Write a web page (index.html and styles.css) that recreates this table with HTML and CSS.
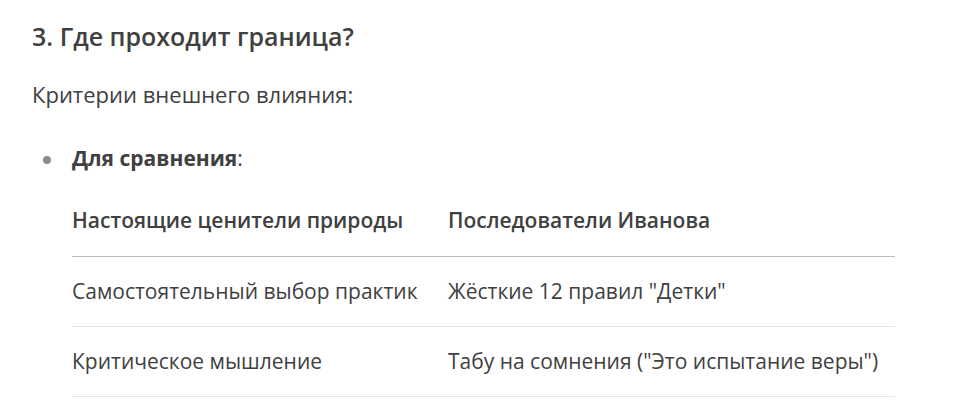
FILE: index.html
```html
<!DOCTYPE html>
<html lang="ru">
<head>
<meta charset="utf-8">
<title>Где проходит граница?</title>
<link rel="stylesheet" href="styles.css">
</head>
<body>
<main class="doc">
  <h3 class="doc-title">3. Где проходит граница?</h3>
  <p class="doc-text">Критерии внешнего влияния:</p>
  <ul class="doc-list">
    <li class="doc-item">
      <p class="item-label"><strong>Для сравнения</strong>:</p>
      <div class="compare">
        <div class="cell head">Настоящие ценители природы</div>
        <div class="cell head">Последователи Иванова</div>
        <div class="cell">Самостоятельный выбор практик</div>
        <div class="cell">Жёсткие 12 правил "Детки"</div>
        <div class="cell">Критическое мышление</div>
        <div class="cell">Табу на сомнения ("Это испытание веры")</div>
      </div>
    </li>
  </ul>
</main>
</body>
</html>
```

FILE: styles.css
```css
html, body {
  margin: 0;
  padding: 0;
  background: #ffffff;
}

body {
  font-family: "Open Sans", "Noto Sans", "DejaVu Sans", sans-serif;
  color: #404040;
  font-size: 21px;
  line-height: 27px;
}

.doc {
  width: 863px;
  padding: 0 0 0 32px;
}

.doc-title {
  margin: 21px 0 0;
  font-size: 25px;
  line-height: 31px;
  font-weight: 600;
}

.doc-text {
  margin: 29px 0 0;
  font-size: 22px;
}

.doc-list {
  margin: 37px 0 0;
  padding: 0 0 0 40px;
  list-style: none;
}

.doc-item {
  position: relative;
}

.doc-item::before {
  content: "";
  position: absolute;
  left: -29px;
  top: 11px;
  width: 8px;
  height: 8px;
  border-radius: 50%;
  background: #8c8c8c;
}

.item-label {
  margin: 0;
}

.item-label strong {
  font-weight: 700;
}

.compare {
  margin-top: 15px;
  display: grid;
  grid-template-columns: 376px 1fr;
}

.cell {
  padding: 21px 0 21px 0;
  border-bottom: 1px solid #e5e5e5;
  white-space: nowrap;
}

.cell.head {
  font-weight: 600;
  padding-top: 20px;
  padding-bottom: 22px;
  border-bottom-color: #bdbdbd;
}
```
